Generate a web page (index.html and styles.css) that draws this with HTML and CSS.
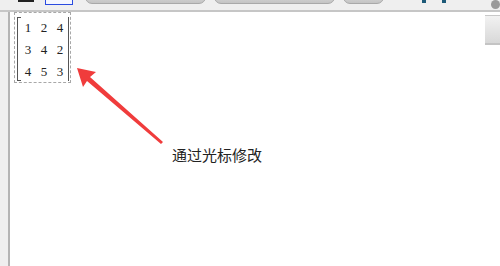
FILE: index.html
```html
<!DOCTYPE html>
<html lang="zh">
<head>
<meta charset="utf-8">
<title>矩阵</title>
<link rel="stylesheet" href="styles.css">
</head>
<body>
<div class="page">
  <div class="toolbar">
    <span class="tb-label"></span>
    <span class="tb-box"></span>
    <span class="pill pill-wide"></span>
    <span class="pill pill-wide"></span>
    <span class="pill pill-small"></span>
    <span class="tb-icons"><i class="tb-icon"></i><i class="tb-icon"></i></span>
  </div>
  <div class="main">
    <div class="gutter"></div>
    <div class="editor">
      <div class="matrix-wrap">
        <div class="matrix">
          <span>1</span><span>2</span><span>4</span>
          <span>3</span><span>4</span><span>2</span>
          <span>4</span><span>5</span><span>3</span>
        </div>
      </div>
    </div>
    <div class="side">
      <div class="side-close"></div>
      <div class="side-bar"></div>
    </div>
  </div>
  <svg class="arrow" width="500" height="266" viewBox="0 0 500 266">
    <polygon points="77,68 96,72 90,77 163,142 161,144 87,81 83,87" fill="#f03c3c"/>
  </svg>
  <div class="note">通过光标修改</div>
</div>
</body>
</html>
```
FILE: styles.css
```css
html, body {
  margin: 0;
  padding: 0;
  background: #ffffff;
}
.page {
  position: relative;
  width: 500px;
  height: 266px;
  overflow: hidden;
  font-family: "Liberation Serif", serif;
}
.toolbar {
  height: 10px;
  background: #efefef;
  border-bottom: 2px solid #c6c6c6;
  display: flex;
  align-items: flex-start;
  overflow: hidden;
}
.tb-label {
  margin-left: 18px;
  width: 16px;
  height: 1px;
  border-top: 2px solid #222;
}
.tb-box {
  margin-left: 11px;
  width: 26px;
  height: 5px;
  margin-top: -1px;
  border: 1px solid #2a4be0;
  border-top: none;
  background: #f4f6ff;
}
.pill {
  height: 14px;
  margin-top: -10px;
  border: 1px solid #a9a9a9;
  border-radius: 7px;
  background: linear-gradient(#e4e4e4, #c4c4c4);
  box-sizing: border-box;
}
.pill-wide { width: 121px; }
.tb-box + .pill { margin-left: 12px; }
.pill + .pill { margin-left: 8px; }
.pill-small { width: 41px; }
.tb-icons {
  display: flex;
  gap: 16px;
  margin-left: 38px;
}
.tb-icon {
  display: block;
  width: 4px;
  height: 3px;
  background: #1d5a78;
}
.main {
  display: flex;
  height: 254px;
}
.gutter {
  width: 8px;
  background: #efefef;
  border-right: 2px solid #b4b4b4;
}
.editor {
  flex: 1;
  background: #ffffff;
  padding: 0 0 0 4px;
}
.matrix-wrap {
  width: 57px;
  height: 71px;
  border: 1px dashed #a8a8a8;
  box-sizing: border-box;
  padding: 4px 1px 1px 2px;
}
.matrix {
  height: 100%;
  border-left: 1px solid #555;
  border-right: 1px solid #555;
  position: relative;
  display: grid;
  grid-template-columns: repeat(3, 16px);
  grid-auto-rows: 22px;
  padding-left: 2px;
  padding-top: 2px;
  font-size: 13px;
  line-height: 18px;
  color: #222;
  box-sizing: border-box;
}
.matrix::before, .matrix::after {
  content: "";
  position: absolute;
  left: 0;
  width: 3px;
  border-top: 1px solid #555;
}
.matrix::before { top: 0; }
.matrix::after { bottom: 0; }
.matrix span {
  text-align: center;
}
.side {
  width: 15px;
  background: #ffffff;
  position: relative;
}
.side-close {
  position: absolute;
  top: -12px;
  right: 0;
  width: 9px;
  height: 9px;
  border-radius: 50%;
  background: #9a9a9a;
}
.side-bar {
  margin-top: 3px;
  height: 27px;
  border-top: 1px solid #c8c8c8;
  border-bottom: 2px solid #c4c4c4;
  background: linear-gradient(#f2f2f2, #d8d8d8);
}
.arrow {
  position: absolute;
  left: 0;
  top: 0;
}
.note {
  position: absolute;
  left: 172px;
  top: 145px;
  font-family: "Noto Sans CJK SC", sans-serif;
  font-size: 15px;
  line-height: 20px;
  color: #222;
}
```
